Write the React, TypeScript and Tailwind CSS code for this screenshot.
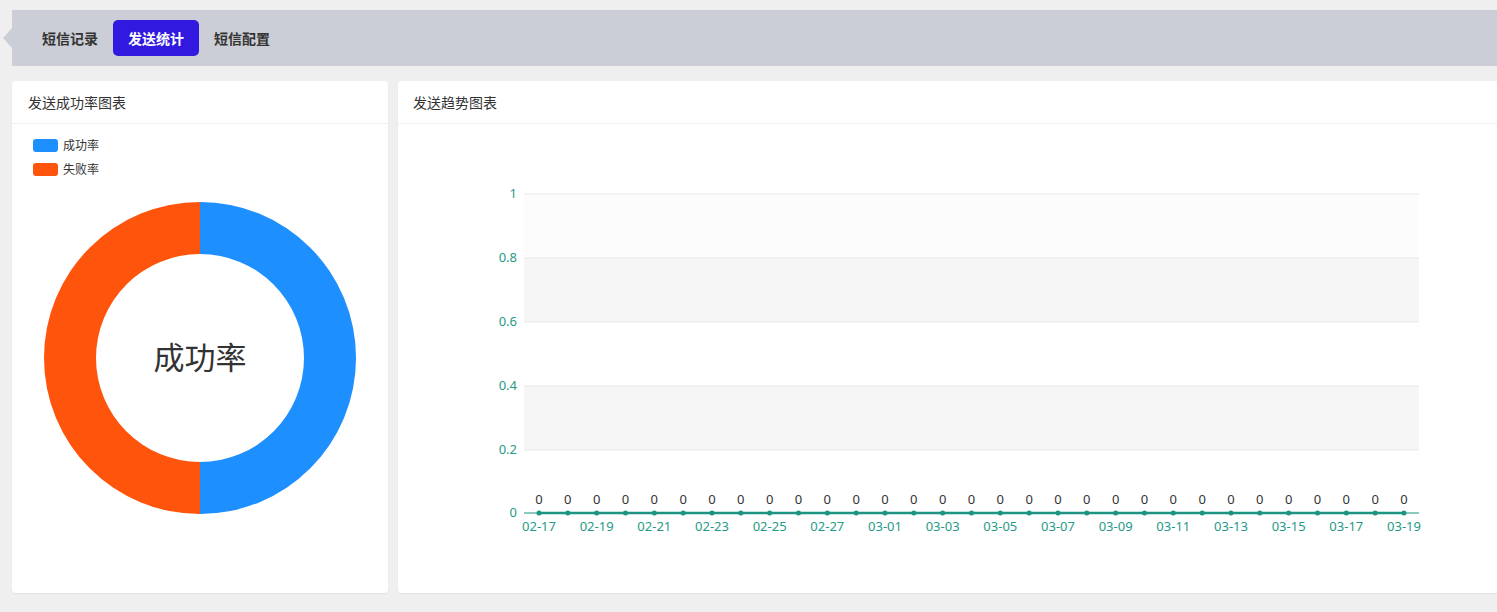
import React from 'react';

const font = { fontFamily: '"Noto Sans CJK SC", "Noto Sans", sans-serif' };
const numFont = { fontFamily: '"Noto Sans", "Open Sans", sans-serif' };

const dates: string[] = [];
for (let d = 17; d <= 28; d++) dates.push(`02-${d}`);
for (let d = 1; d <= 19; d++) dates.push(`03-${String(d).padStart(2, '0')}`);

function arc(cx: number, cy: number, r1: number, r2: number, a0: number, a1: number) {
  // angles in degrees, 0 = top, clockwise
  const p = (r: number, a: number) => {
    const rad = ((a - 90) * Math.PI) / 180;
    return `${cx + r * Math.cos(rad)} ${cy + r * Math.sin(rad)}`;
  };
  const large = a1 - a0 > 180 ? 1 : 0;
  return `M ${p(r1, a0)} A ${r1} ${r1} 0 ${large} 1 ${p(r1, a1)} L ${p(r2, a1)} A ${r2} ${r2} 0 ${large} 0 ${p(r2, a0)} Z`;
}

function Donut() {
  const cx = 188;
  const cy = 177;
  return (
    <svg width="376" height="360" className="block">
      <path d={arc(cx, cy, 156, 104, 0, 180)} fill="#1e8fff" />
      <path d={arc(cx, cy, 156, 104, 180, 360)} fill="#ff540c" />
      <text x={cx} y={cy + 11} textAnchor="middle" fontSize="31" fill="#333" style={font}>
        成功率
      </text>
    </svg>
  );
}

function Trend() {
  const left = 126;
  const right = 1021;
  const ys = [70, 134, 198, 262, 326, 389];
  const labels = ['1', '0.8', '0.6', '0.4', '0.2', '0'];
  const x0 = 141;
  const step = (1006 - 141) / 30;
  const teal = '#1c9480';
  const label = '#1f9a86';
  return (
    <svg width="1099" height="469" className="block">
      <rect x={left} y={70} width={right - left} height={64} fill="#fcfcfc" />
      <rect x={left} y={134} width={right - left} height={64} fill="#f6f6f6" />
      <rect x={left} y={262} width={right - left} height={64} fill="#f6f6f6" />
      {ys.slice(0, 5).map((y) => (
        <line key={y} x1={left} x2={right} y1={y} y2={y} stroke="#e8e8e8" strokeWidth="1" />
      ))}
      {labels.map((l, i) => (
        <text key={l} x={119} y={ys[i] + 4} textAnchor="end" fontSize="13" fill={label} style={numFont}>
          {l}
        </text>
      ))}
      <line x1={left} x2={right} y1={389} y2={389} stroke={teal} strokeWidth="1" />
      <line x1={x0} x2={x0 + step * 30} y1={389} y2={389} stroke={teal} strokeWidth="2.5" />
      {dates.map((d, i) => {
        const x = x0 + step * i;
        return (
          <g key={d}>
            <circle cx={x} cy={389} r="2.5" fill={teal} />
            <text x={x} y={380} textAnchor="middle" fontSize="13" fill="#333" style={numFont}>
              0
            </text>
            {i % 2 === 0 && (
              <text x={x} y={407} textAnchor="middle" fontSize="13" fill={label} style={numFont}>
                {d}
              </text>
            )}
          </g>
        );
      })}
    </svg>
  );
}

export default function App() {
  return (
    <div className="min-h-screen w-[1497px] overflow-hidden bg-[#efefef] pt-[10px]" style={font}>
      {/* Tabs */}
      <div className="relative ml-3 flex h-14 items-center bg-[#cbced6] pl-[15px]">
        <span className="absolute -left-[9px] top-[18px] h-0 w-0 border-y-[10px] border-r-[9px] border-y-transparent border-r-[#cbced6]" />
        <button className="h-9 rounded-[5px] px-[15px] text-sm font-bold text-[#333]">短信记录</button>
        <button className="h-9 rounded-[5px] bg-[#3119e0] px-[15px] text-sm font-bold text-white">发送统计</button>
        <button className="h-9 rounded-[5px] px-[15px] text-sm font-bold text-[#333]">短信配置</button>
      </div>

      <div className="mt-[15px] flex gap-[10px] pl-3">
        {/* Success rate */}
        <section className="h-[512px] w-[376px] shrink-0 rounded-[4px] bg-white shadow-[0_1px_2px_rgba(0,0,0,0.06)]">
          <h2 className="flex h-[43px] items-center border-b border-[#f0f0f0] px-4 text-sm text-[#333]">
            发送成功率图表
          </h2>
          <div className="pl-[21px] pt-[9px]">
            <div className="flex h-6 items-center gap-[5px] text-xs text-[#333]">
              <span className="h-[13px] w-[25px] rounded-[3px] bg-[#1e8fff]" />
              成功率
            </div>
            <div className="flex h-6 items-center gap-[5px] text-xs text-[#333]">
              <span className="h-[13px] w-[25px] rounded-[3px] bg-[#ff540c]" />
              失败率
            </div>
          </div>
          <Donut />
        </section>

        {/* Trend */}
        <section className="h-[512px] w-[1099px] shrink-0 rounded-l-[4px] bg-white shadow-[0_1px_2px_rgba(0,0,0,0.06)]">
          <h2 className="flex h-[43px] items-center border-b border-[#f0f0f0] px-[15px] text-sm text-[#333]">
            发送趋势图表
          </h2>
          <Trend />
        </section>
      </div>
    </div>
  );
}
